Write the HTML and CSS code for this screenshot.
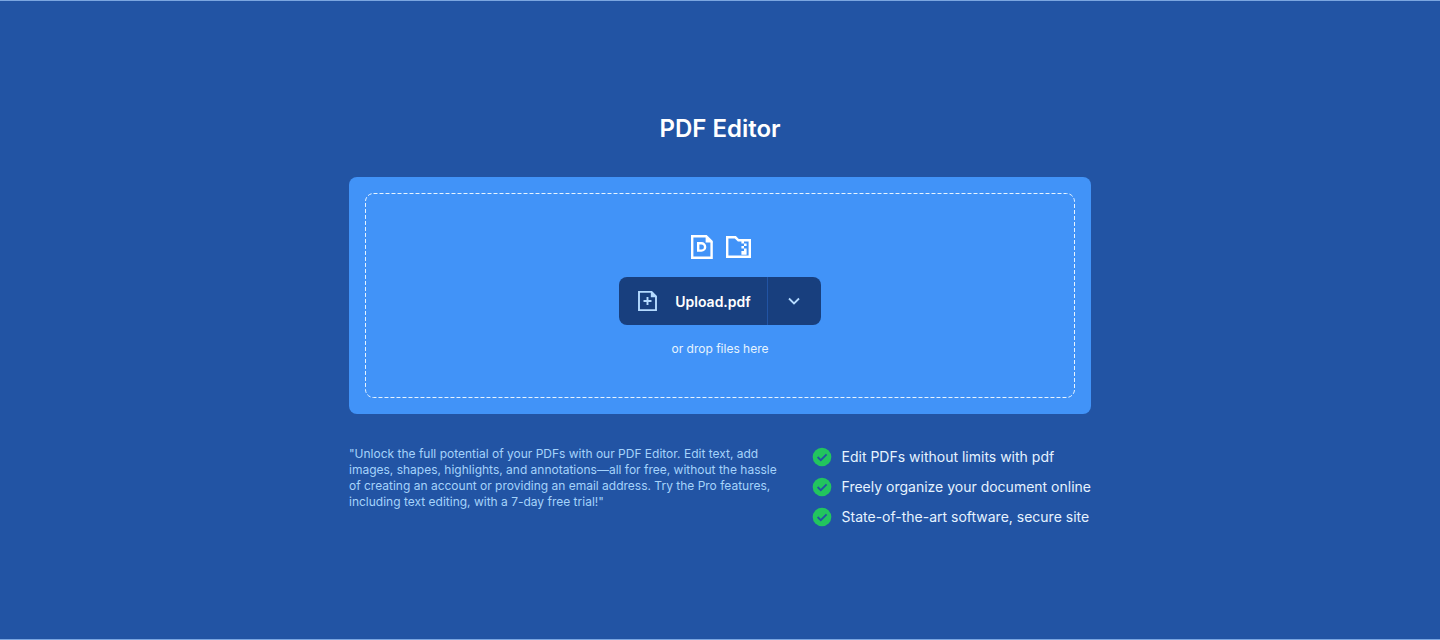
FILE: index.html
```html
<!DOCTYPE html>
<html lang="en">
<head>
<meta charset="utf-8">
<meta name="viewport" content="width=device-width, initial-scale=1">
<title>PDF Editor</title>
<link rel="stylesheet" href="styles.css">
</head>
<body>
<main class="hero">
  <div class="container">
    <h1 class="title">PDF Editor</h1>
    <section class="panel" aria-label="Upload a file">
      <div class="dropzone">
        <svg class="outline" aria-hidden="true"><rect class="outline-rect" x="0.5" y="0.5" rx="8"/></svg>
        <div class="formats">
          <svg class="format-icon" viewBox="0 0 28 28" fill="none" stroke="currentColor" stroke-width="2.4" aria-hidden="true">
            <path d="M4.2 3.2h14l5.4 5.4v16.2H4.2z"/>
            <path d="M17.6 2v7.4h7.2z" fill="currentColor" stroke="none"/>
            <path d="M10.2 10.2h3.2a3.7 3.7 0 0 1 0 7.4h-3.2z"/>
          </svg>
          <svg class="format-icon" viewBox="0 0 28 28" fill="none" stroke="currentColor" stroke-width="2.4" aria-hidden="true">
            <path d="M3.2 4.3h8.2l3 3h11.4v16.5H3.2z"/>
            <path fill="currentColor" stroke="none" d="M17.4 8h2.6v2.5h-2.6zM20 10.5h2.6v2.5H20zM17.4 13h2.6v2.5h-2.6zM20 15.5h2.6v6.3h-5.2V18H20z"/>
          </svg>
        </div>
        <div class="upload">
          <button class="upload-main" type="button">
            <svg class="file-icon" viewBox="0 0 24 24" fill="none" stroke="currentColor" stroke-width="1.9" aria-hidden="true">
              <path d="M4 2.9h12.6l4.4 4.4v13.8H4z"/>
              <path d="M15.8 2v6.2H22z" fill="currentColor" stroke="none"/>
              <path d="M12.5 8v8M8.5 12h8"/>
            </svg>
            <span>Upload.pdf</span>
          </button>
          <button class="upload-more" type="button" aria-label="More upload options">
            <svg class="chevron" viewBox="0 0 16 16" fill="none" stroke="currentColor" stroke-width="1.8" aria-hidden="true"><path d="M3 5.5l5 5 5-5"/></svg>
          </button>
        </div>
        <p class="hint">or drop files here</p>
      </div>
    </section>
    <div class="details">
      <p class="description">"Unlock the full potential of your PDFs with our PDF Editor. Edit text, add images, shapes, highlights, and annotations—all for free, without the hassle of creating an account or providing an email address. Try the Pro features, including text editing, with a 7-day free trial!"</p>
      <ul class="benefits">
        <li class="benefit"><svg class="check" viewBox="0 0 20 20" aria-hidden="true"><circle cx="10" cy="10" r="9.3" fill="#22c55e"/><path d="M5.6 10l3.2 3.2 5.8-5.8" fill="none" stroke="#2254a4" stroke-width="1.8"/></svg>Edit PDFs without limits with pdf</li>
        <li class="benefit"><svg class="check" viewBox="0 0 20 20" aria-hidden="true"><circle cx="10" cy="10" r="9.3" fill="#22c55e"/><path d="M5.6 10l3.2 3.2 5.8-5.8" fill="none" stroke="#2254a4" stroke-width="1.8"/></svg>Freely organize your document online</li>
        <li class="benefit"><svg class="check" viewBox="0 0 20 20" aria-hidden="true"><circle cx="10" cy="10" r="9.3" fill="#22c55e"/><path d="M5.6 10l3.2 3.2 5.8-5.8" fill="none" stroke="#2254a4" stroke-width="1.8"/></svg>State-of-the-art software, secure site</li>
      </ul>
    </div>
  </div>
</main>
</body>
</html>
```

FILE: styles.css
```css
* {
  box-sizing: border-box;
}

body {
  margin: 0;
  font-family: Inter, "Liberation Sans", sans-serif;
  color: #fff;
}

.hero {
  display: flex;
  align-items: center;
  justify-content: center;
  min-height: 100vh;
  padding: 32px 16px;
  background: #2254a4;
  border-top: 1px solid #7ba6e0;
  border-bottom: 1px solid #7ba6e0;
}

.container {
  width: 100%;
  max-width: 742px;
}

.title {
  margin: 0 0 32px;
  font-size: 24px;
  line-height: 32px;
  font-weight: 600;
  text-align: center;
}

.panel {
  padding: 16px;
  border-radius: 8px;
  background: #4193f8;
}

.dropzone {
  position: relative;
  display: flex;
  flex-direction: column;
  align-items: center;
  padding: 40px 16px 41px;
}

.outline {
  position: absolute;
  inset: 0;
  width: 100%;
  height: 100%;
  pointer-events: none;
}

.outline-rect {
  width: calc(100% - 1px);
  height: calc(100% - 1px);
  fill: none;
  stroke: #e6f3ff;
  stroke-dasharray: 4 2;
}

.formats {
  display: flex;
  gap: 8px;
  margin-bottom: 16px;
}

.format-icon {
  width: 28px;
  height: 28px;
}

.upload {
  display: flex;
  height: 48px;
  border-radius: 8px;
  background: #183f7e;
  overflow: hidden;
}

.upload button {
  display: flex;
  align-items: center;
  border: 0;
  background: none;
  color: #fff;
  font: inherit;
  cursor: pointer;
}

.upload .upload-main {
  gap: 16px;
  padding: 0 16px;
  font-size: 14px;
  font-weight: 600;
}

.upload .upload-more {
  justify-content: center;
  width: 54px;
  padding: 0;
  border-left: 1px solid #2254a4;
}

.file-icon,
.chevron {
  color: #b5dbff;
}

.file-icon {
  width: 24px;
  height: 24px;
}

.chevron {
  width: 16px;
  height: 16px;
}

.hint {
  margin: 16px 0 0;
  font-size: 12px;
  line-height: 16px;
  color: #e6f3ff;
}

.details {
  display: flex;
  flex-wrap: wrap;
  justify-content: space-between;
  gap: 32px;
  margin-top: 32px;
}

.description {
  flex: 1 1 320px;
  max-width: 430px;
  margin: 0;
  font-size: 12px;
  line-height: 16px;
  color: #a5d3fb;
}

.benefits {
  display: grid;
  gap: 10px;
  margin: 0;
  padding: 1px 0 0;
  list-style: none;
}

.benefit {
  display: flex;
  align-items: center;
  gap: 10px;
  font-size: 14px;
  line-height: 20px;
  color: #e6f3ff;
}

.check {
  width: 20px;
  height: 20px;
}
```
